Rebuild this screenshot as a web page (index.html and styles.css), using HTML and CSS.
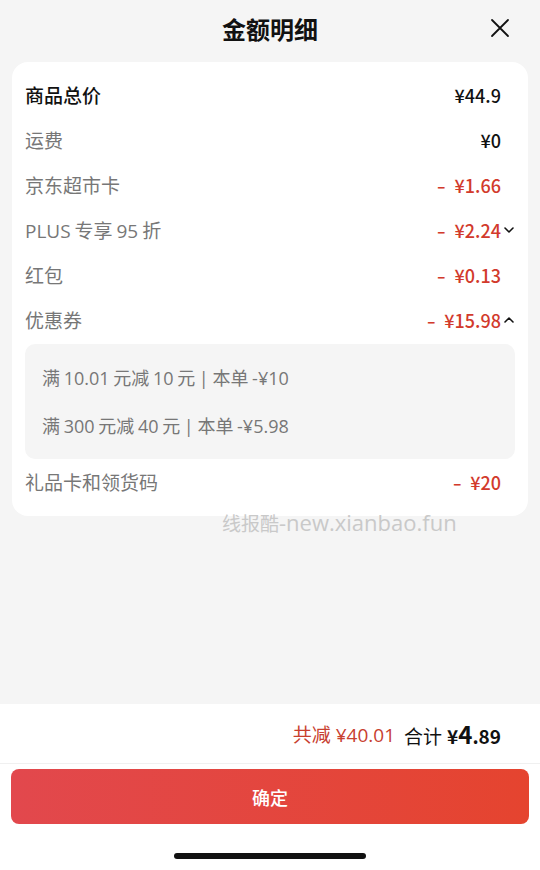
FILE: index.html
```html
<!DOCTYPE html>
<html lang="zh-CN">
<head>
    <meta charset="UTF-8">
    <meta name="viewport" content="width=device-width, initial-scale=1.0">
    <title>金额明细</title>
    <link rel="stylesheet" href="styles.css">
</head>
<body>
    <div class="sheet">
        <div class="header">
            <h1>金额明细</h1>
            <span class="close">
                <svg width="20" height="20" viewBox="0 0 20 20"><path d="M2 2L18 18M18 2L2 18" stroke="#111" stroke-width="1.8" stroke-linecap="round"/></svg>
            </span>
        </div>

        <div class="card">
            <div class="row">
                <span class="label strong">商品总价</span>
                <span class="value dark">¥44.9</span>
            </div>
            <div class="row">
                <span class="label">运费</span>
                <span class="value dark">¥0</span>
            </div>
            <div class="row">
                <span class="label">京东超市卡</span>
                <span class="value red"><em>-</em>¥1.66</span>
            </div>
            <div class="row">
                <span class="label">PLUS 专享 95 折</span>
                <span class="value red"><em>-</em>¥2.24<i class="chev"><svg width="12" height="8" viewBox="0 0 12 8"><path d="M2 2L6 6L10 2" fill="none" stroke="#111" stroke-width="1.6" stroke-linecap="round" stroke-linejoin="round"/></svg></i></span>
            </div>
            <div class="row">
                <span class="label">红包</span>
                <span class="value red"><em>-</em>¥0.13</span>
            </div>
            <div class="row">
                <span class="label">优惠券</span>
                <span class="value red"><em>-</em>¥15.98<i class="chev"><svg width="12" height="8" viewBox="0 0 12 8"><path d="M2 6L6 2L10 6" fill="none" stroke="#111" stroke-width="1.6" stroke-linecap="round" stroke-linejoin="round"/></svg></i></span>
            </div>
            <div class="coupons">
                <p>满 10.01 元减 10 元 | 本单 -¥10</p>
                <p>满 300 元减 40 元 | 本单 -¥5.98</p>
            </div>
            <div class="row">
                <span class="label">礼品卡和领货码</span>
                <span class="value red"><em>-</em>¥20</span>
            </div>
        </div>

        <div class="watermark">线报酷<span>-new.xianbao.fun</span></div>

        <div class="footer">
            <div class="summary">
                <span class="saved">共减 ¥40.01</span>
                <span class="total">合计 <b class="yen">¥</b><b class="int">4</b><b class="dec">.89</b></span>
            </div>
            <button type="button">确定</button>
            <div class="home-bar"></div>
        </div>
    </div>
</body>
</html>
```

FILE: styles.css
```css
* {
    box-sizing: border-box;
}
body {
    margin: 0;
    font-family: "Open Sans", "Noto Sans CJK SC", sans-serif;
    background-color: #f5f5f5;
}
.sheet {
    position: relative;
    height: 870px;
    display: flex;
    flex-direction: column;
}
.header {
    height: 56px;
    display: flex;
    align-items: center;
    justify-content: center;
    position: relative;
}
.header h1 {
    margin: 0;
    font-size: 24px;
    font-weight: 700;
    color: #111;
}
.close {
    position: absolute;
    right: 30px;
    top: 18px;
    width: 20px;
    height: 20px;
    display: flex;
}
.card {
    margin: 6px 12px 0;
    background: #fff;
    border-radius: 16px;
    padding: 10px 13px 12px;
}
.row {
    height: 45px;
    display: flex;
    align-items: center;
    justify-content: space-between;
}
.label {
    color: #777;
    font-size: 19px;
    word-spacing: -1px;
}
.label.strong {
    color: #111;
    font-weight: 500;
    font-family: "Noto Sans CJK SC", sans-serif;
}
.value {
    display: flex;
    align-items: center;
    padding-right: 14px;
    font-family: "Noto Sans CJK SC", sans-serif;
    font-size: 18px;
    font-weight: 500;
    position: relative;
}
.value em {
    font-style: normal;
    transform: scaleX(1.4);
    margin-right: 10px;
}
.value.dark {
    color: #111;
}
.value.red {
    color: #d23a2c;
}
.chev {
    position: absolute;
    right: 0;
    top: 50%;
    margin-top: -4px;
    width: 12px;
    height: 8px;
    display: flex;
}
.coupons {
    background: #f5f5f5;
    border-radius: 10px;
    padding: 10px 17px 9px;
    margin: 2px 0 0;
}
.coupons p {
    margin: 0;
    height: 48px;
    line-height: 48px;
    font-size: 18px;
    color: #777;
    word-spacing: -1px;
}
.watermark {
    position: absolute;
    left: 222px;
    top: 507px;
    font-size: 19px;
    color: #c9c9c9;
}
.watermark span {
    font-size: 22px;
}
.footer {
    margin-top: auto;
    background: #fff;
}
.summary {
    height: 60px;
    display: flex;
    align-items: center;
    justify-content: flex-end;
    gap: 9px;
    padding-right: 39px;
    border-bottom: 1px solid #f0f0f0;
    font-size: 19px;
}
.saved {
    color: #c8402f;
}
.total {
    color: #111;
}
.total b {
    font-family: "Noto Sans CJK SC", sans-serif;
    font-weight: 700;
}
.total .int {
    font-size: 24px;
}
.total .dec {
    font-size: 19px;
}
button {
    display: block;
    width: 518px;
    height: 55px;
    margin: 5px 11px 0;
    border: none;
    border-radius: 8px;
    background: linear-gradient(90deg, #e2484d, #e5442f);
    color: #fff;
    font-family: inherit;
    font-size: 18px;
    font-weight: 500;
}
.home-bar {
    width: 192px;
    height: 6px;
    border-radius: 3px;
    background: #111;
    margin: 29px auto 11px;
}
```
